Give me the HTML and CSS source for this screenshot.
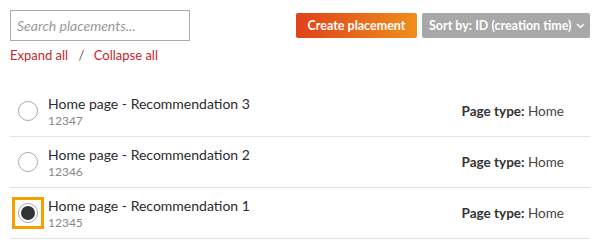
FILE: index.html
```html
<!DOCTYPE html>
<html>
<head>
<meta charset="utf-8">
<link rel="stylesheet" href="styles.css">
</head>
<body>
<div class="page">
  <div class="toolbar">
    <div class="left">
      <input class="search" type="text" placeholder="Search placements...">
      <div class="links">
        <a class="link">Expand all</a>
        <span class="sep">/</span>
        <a class="link">Collapse all</a>
      </div>
    </div>
    <div class="actions">
      <button class="btn btn-create">Create placement</button>
      <button class="btn btn-sort"><span>Sort by: ID (creation time)</span>
        <svg class="chev" width="9" height="6" viewBox="0 0 9 6"><path d="M1 1 L4.5 4.5 L8 1" fill="none" stroke="#fff" stroke-width="1.5"/></svg>
      </button>
    </div>
  </div>
  <ul class="list">
    <li class="row">
      <span class="radio-wrap"><span class="radio"></span></span>
      <div class="info">
        <div class="title">Home page - Recommendation 3</div>
        <div class="id">12347</div>
      </div>
      <div class="meta"><b>Page type:</b> Home</div>
    </li>
    <li class="row">
      <span class="radio-wrap"><span class="radio"></span></span>
      <div class="info">
        <div class="title">Home page - Recommendation 2</div>
        <div class="id">12346</div>
      </div>
      <div class="meta"><b>Page type:</b> Home</div>
    </li>
    <li class="row">
      <span class="radio-wrap focused"><span class="radio checked"></span></span>
      <div class="info">
        <div class="title">Home page - Recommendation 1</div>
        <div class="id">12345</div>
      </div>
      <div class="meta"><b>Page type:</b> Home</div>
    </li>
  </ul>
</div>
</body>
</html>
```
FILE: styles.css
```css
* { box-sizing: border-box; }
body {
  margin: 0;
  font-family: Lato, "Liberation Sans", sans-serif;
  color: #333;
  background: #fff;
}
.page { padding: 10px; }
.toolbar {
  display: flex;
  justify-content: space-between;
  align-items: flex-start;
}
.search {
  width: 180px;
  height: 31px;
  border: 1px solid #aaa;
  padding: 0 6px;
  font-family: Lato, sans-serif;
  font-size: 14px;
  margin: 0;
  display: block;
}
.search::placeholder { color: #999; font-style: italic; }
.links {
  margin-top: 6px;
  font-size: 13px;
  line-height: 16px;
  color: #c4262e;
}
.link { color: #c4262e; }
.sep { margin: 0 6px 0 7px; color: #555; }
.actions {
  display: flex;
  gap: 5px;
  margin-top: 3px;
}
.btn {
  height: 25px;
  border: none;
  border-radius: 2px;
  color: #fff;
  font-family: Lato, sans-serif;
  font-weight: bold;
  font-size: 12.5px;
  padding: 0;
  white-space: nowrap;
  display: flex;
  align-items: center;
}
.btn-create {
  width: 121px;
  justify-content: center;
  background: linear-gradient(to right, #df4219, #f08e1c);
}
.btn-sort {
  width: 168px;
  background: #a8a8a8;
  padding: 0 6px 0 7px;
  justify-content: space-between;
}
.chev { margin-left: 4px; flex: none; }
.list {
  list-style: none;
  margin: 23px 0 0;
  padding: 0;
}
.row {
  display: flex;
  align-items: center;
  height: 51px;
  border-bottom: 1px solid #e2e2e2;
  padding: 0 26px 0 0;
}
.radio-wrap {
  width: 32px;
  height: 32px;
  margin-left: 2px;
  display: flex;
  align-items: center;
  justify-content: center;
  border: 3px solid transparent;
}
.radio-wrap.focused { border-color: #f5a000; }
.radio {
  width: 20px;
  height: 20px;
  border-radius: 50%;
  border: 1px solid #aaa;
  background: #fff;
  position: relative;
}
.radio.checked::after {
  content: "";
  position: absolute;
  left: 2px; top: 2px;
  width: 14px; height: 14px;
  border-radius: 50%;
  background: #333;
}
.info { flex: 1; margin-left: 4px; padding-top: 1px; }
.title { font-size: 14px; line-height: 18px; color: #2b2b2b; }
.id { font-size: 12px; line-height: 16px; color: #888; }
.meta { font-size: 13.5px; color: #444; }
.meta b { color: #333; }
```
